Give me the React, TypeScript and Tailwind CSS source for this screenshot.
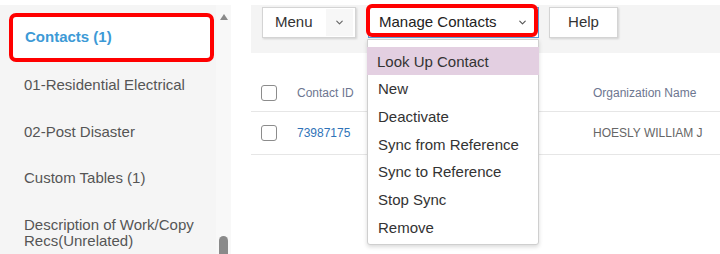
import React from 'react';
import { ChevronDown } from 'lucide-react';

const sideItems = ['01-Residential Electrical', '02-Post Disaster', 'Custom Tables (1)'];
const menuItems = ['Look Up Contact', 'New', 'Deactivate', 'Sync from Reference', 'Sync to Reference', 'Stop Sync', 'Remove'];

const Checkbox = () => (
  <span className="block w-[16px] h-[16px] rounded-[3px] border-[1.5px] border-[#8c8c8c] bg-white" />
);

export default function App() {
  return (
    <div className="w-[720px] h-[254px] overflow-hidden bg-white flex pt-[5px] font-['Liberation_Sans',Arial,sans-serif]">
      {/* SIDEBAR */}
      <div className="w-[216px] h-full bg-[#f5f5f5] flex flex-col">
        <div className="ml-[9px] mr-[2px] mt-[8px] h-[49px] rounded-[7px] border-4 border-[#ff0000] bg-white flex items-center pl-[12px]">
          <span className="text-[15px] font-bold text-[#3d9ad6]">Contacts (1)</span>
        </div>
        {sideItems.map((s) => (
          <div key={s} className="h-[46.5px] flex items-center pl-[24px] text-[15px] text-[#555]">
            {s}
          </div>
        ))}
        <div className="pl-[24px] pt-[15px] text-[15px] leading-[16px] text-[#555]">
          Description of Work/Copy
          <br />
          Recs(Unrelated)
        </div>
      </div>

      {/* SCROLLBAR */}
      <div className="w-[15px] h-full bg-[#f8f8f8] flex flex-col items-center justify-between pt-[9px]">
        <span className="w-0 h-0 border-l-[4px] border-r-[4px] border-b-[6px] border-l-transparent border-r-transparent border-b-[#8a8a8a]" />
        <span className="w-[9px] h-[18px] rounded-t-[5px] bg-[#8a8a8a]" />
      </div>

      {/* MAIN */}
      <div className="flex-1 ml-[20px] flex flex-col">
        <div className="h-[48px] bg-[#f4f4f4] flex items-start pl-[11px] pt-[2px]">
          <button className="w-[94px] h-[31px] bg-white border border-[#d4d4d4] shadow-[1px_1px_2px_rgba(0,0,0,0.15)] flex items-stretch p-0">
            <span className="flex-1 flex items-center pl-[12px] text-[15px] text-[#333]">Menu</span>
            <span className="w-[27px] my-[1px] mr-[2px] bg-[#f7f7f7] flex items-center justify-center">
              <ChevronDown size={11} strokeWidth={2.5} color="#666" />
            </span>
          </button>

          <div className="relative ml-[12px] w-[171px] h-[31px]">
            <button className="w-full h-full bg-white border border-[#5b9bd5] flex items-center justify-between pl-[10px] pr-[10px]">
              <span className="text-[15px] text-[#222]">Manage Contacts</span>
              <ChevronDown size={11} strokeWidth={2.5} color="#555" />
            </button>
            <div className="absolute left-[-2px] top-[-3px] w-[172px] h-[33px] rounded-[6px] border-4 border-[#ff0000] pointer-events-none" />

            {/* DROPDOWN */}
            <div className="absolute left-[-1px] top-[32px] w-[172px] h-[206px] bg-white border border-[#cfcfcf] rounded-b-[3px] shadow-[0_2px_4px_rgba(0,0,0,0.15)] pt-[7px] z-10">
              {menuItems.map((m, i) => (
                <div
                  key={m}
                  className={`h-[27.7px] flex items-center pt-[2px] pl-[10px] text-[15px] text-[#333] ${i === 0 ? 'bg-[#e3cfe1] -mx-px' : ''}`}
                >
                  {m}
                </div>
              ))}
            </div>
          </div>

          <button className="ml-[10px] w-[69px] h-[31px] bg-white border border-[#d4d4d4] shadow-[1px_1px_2px_rgba(0,0,0,0.15)] flex items-center justify-center text-[15px] text-[#333]">
            Help
          </button>
        </div>

        {/* TABLE */}
        <div className="mt-[22px]">
          <div className="h-[37px] flex items-center border-b border-[#e6e6e6]">
            <div className="w-[46px] pl-[10px]"><Checkbox /></div>
            <div className="w-[296px] text-[12px] text-[#6d7690]">Contact ID</div>
            <div className="flex-1 text-[12px] text-[#6d7690]">Organization Name</div>
          </div>
          <div className="h-[43px] flex items-center border-b border-[#e6e6e6]">
            <div className="w-[46px] pl-[10px]"><Checkbox /></div>
            <div className="w-[296px] text-[12px] text-[#2f73b8]">73987175</div>
            <div className="flex-1 text-[12px] text-[#666]">HOESLY WILLIAM J</div>
          </div>
        </div>
      </div>
    </div>
  );
}
